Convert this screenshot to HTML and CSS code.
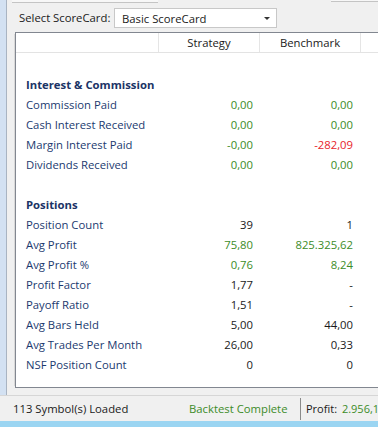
FILE: index.html
```html
<!DOCTYPE html>
<html lang="en">
<head>
    <meta charset="UTF-8">
    <meta name="viewport" content="width=device-width, initial-scale=1.0">
    <title>ScoreCard</title>
    <link rel="stylesheet" href="styles.css">
</head>
<body>
    <div class="workspace">
        <div class="edge"></div>
        <div class="panel">
            <div class="tabs">
                <div class="tab-line left"></div>
                <div class="tab-active"></div>
                <div class="tab-line right"></div>
            </div>
            <div class="toolbar">
                <span class="toolbar-label">Select ScoreCard:</span>
                <div class="combo">
                    <span>Basic ScoreCard</span>
                    <span class="combo-arrow"></span>
                </div>
            </div>
            <div class="grid">
                <div class="row header">
                    <div class="cell name"></div>
                    <div class="cell col">Strategy</div>
                    <div class="cell col">Benchmark</div>
                    <div class="cell rest"></div>
                </div>
                <div class="body">
                    <div class="row group"><div class="cell name">Interest &amp; Commission</div></div>
                    <div class="row">
                        <div class="cell name">Commission Paid</div>
                        <div class="cell val green">0,00</div>
                        <div class="cell val green">0,00</div>
                    </div>
                    <div class="row">
                        <div class="cell name">Cash Interest Received</div>
                        <div class="cell val green">0,00</div>
                        <div class="cell val green">0,00</div>
                    </div>
                    <div class="row">
                        <div class="cell name">Margin Interest Paid</div>
                        <div class="cell val green">-0,00</div>
                        <div class="cell val red">-282,09</div>
                    </div>
                    <div class="row">
                        <div class="cell name">Dividends Received</div>
                        <div class="cell val green">0,00</div>
                        <div class="cell val green">0,00</div>
                    </div>
                    <div class="row spacer"></div>
                    <div class="row group"><div class="cell name">Positions</div></div>
                    <div class="row">
                        <div class="cell name">Position Count</div>
                        <div class="cell val">39</div>
                        <div class="cell val">1</div>
                    </div>
                    <div class="row">
                        <div class="cell name">Avg Profit</div>
                        <div class="cell val green">75,80</div>
                        <div class="cell val green">825.325,62</div>
                    </div>
                    <div class="row">
                        <div class="cell name">Avg Profit %</div>
                        <div class="cell val green">0,76</div>
                        <div class="cell val green">8,24</div>
                    </div>
                    <div class="row">
                        <div class="cell name">Profit Factor</div>
                        <div class="cell val">1,77</div>
                        <div class="cell val">-</div>
                    </div>
                    <div class="row">
                        <div class="cell name">Payoff Ratio</div>
                        <div class="cell val">1,51</div>
                        <div class="cell val">-</div>
                    </div>
                    <div class="row">
                        <div class="cell name">Avg Bars Held</div>
                        <div class="cell val">5,00</div>
                        <div class="cell val">44,00</div>
                    </div>
                    <div class="row">
                        <div class="cell name">Avg Trades Per Month</div>
                        <div class="cell val">26,00</div>
                        <div class="cell val">0,33</div>
                    </div>
                    <div class="row">
                        <div class="cell name">NSF Position Count</div>
                        <div class="cell val">0</div>
                        <div class="cell val">0</div>
                    </div>
                </div>
            </div>
        </div>
    </div>
    <div class="status">
        <span class="status-loaded">113 Symbol(s) Loaded</span>
        <span class="status-done">Backtest Complete</span>
        <span class="status-sep"></span>
        <span class="status-profit">Profit: <span class="green">2.956,1</span></span>
    </div>
    <div class="window-bottom"></div>
</body>
</html>
```

FILE: styles.css
```css
body {
    margin: 0;
    width: 378px;
    height: 427px;
    overflow: hidden;
    background: #f0f0f0;
    font-family: "Open Sans", "Noto Sans", sans-serif;
    font-size: 11.3px;
    color: #1a1a1a;
    display: flex;
    flex-direction: column;
}
.workspace {
    display: flex;
    height: 395px;
}
.edge {
    width: 6px;
    background: #d3e1f2;
    border-right: 1px solid #a9b4c2;
    flex-shrink: 0;
}
.panel {
    flex: 1;
    display: flex;
    flex-direction: column;
    background: #f0f0f0;
    min-width: 0;
}
.tabs {
    display: flex;
    height: 3px;
}
.tab-line {
    border-bottom: 1px solid #c4c4c4;
    background: #f7f7f7;
    height: 2px;
}
.tab-line.left {
    width: 146px;
    margin-left: 5px;
}
.tab-active {
    width: 173px;
    background: #f0f0f0;
}
.tab-line.right {
    flex: 1;
    height: 1px;
}
.toolbar {
    display: flex;
    align-items: center;
    height: 29px;
    padding-left: 12px;
}
.toolbar-label {
    width: 95px;
    flex-shrink: 0;
}
.combo {
    width: 163px;
    height: 20px;
    box-sizing: border-box;
    background: #fff;
    border: 1px solid #c8c8c8;
    display: flex;
    align-items: center;
    justify-content: space-between;
    padding: 0 6px 0 7px;
    margin-top: 1px;
}
.combo-arrow {
    width: 0;
    height: 0;
    border-left: 3px solid transparent;
    border-right: 3px solid transparent;
    border-top: 3px solid #333;
}
.grid {
    margin-left: 8px;
    height: 354px;
    background: #fff;
    border: 1px solid #828790;
    border-right: none;
    box-shadow: -3px 0 0 -2px #d8d8d8;
}
.row {
    display: flex;
    height: 20px;
    align-items: center;
}
.cell {
    flex-shrink: 0;
    white-space: nowrap;
}
.name {
    width: 143px;
    padding-left: 10px;
    box-sizing: border-box;
    color: #1b3a6f;
}
.col {
    width: 100px;
    text-align: center;
}
.val {
    width: 100px;
    text-align: right;
    padding-right: 6px;
    box-sizing: border-box;
}
.header {
    height: 19px;
    border-bottom: 1px solid #e3e3e3;
    align-items: stretch;
}
.header .cell {
    border-right: 1px solid #e5e5e5;
    display: flex;
    align-items: center;
    justify-content: center;
}
.header .rest {
    flex: 1;
    border-right: none;
}
.body {
    padding-top: 21px;
}
.group .name {
    font-weight: bold;
    color: #1b3466;
    width: 200px;
}
.green {
    color: #3c8c28;
}
.red {
    color: #e8232b;
}
.status {
    height: 25px;
    border-top: 1px solid #d6d6d6;
    display: flex;
    align-items: center;
    padding-left: 13px;
    white-space: nowrap;
}
.status > span {
    flex-shrink: 0;
}
.status-loaded {
    width: 176px;
}
.status-done {
    color: #3c8c28;
    width: 111px;
}
.status-sep {
    width: 1px;
    height: 22px;
    background: #8a8a8a;
    margin-right: 5px;
}
.status-profit {
    font-size: 11px;
}
.status-profit .green {
    margin-left: 2px;
}
.window-bottom {
    flex: 1;
    background: #9bd5f2;
}
```
